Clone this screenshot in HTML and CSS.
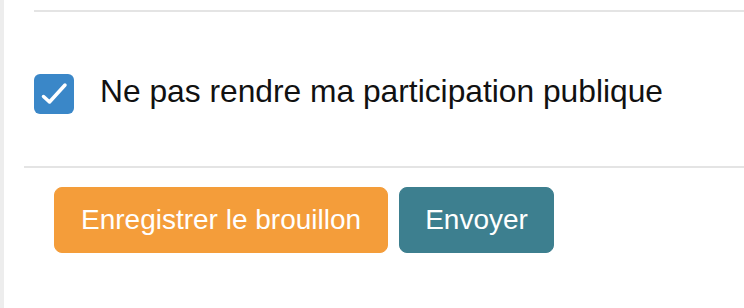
FILE: index.html
```html
<!DOCTYPE html>
<html lang="fr">
<head>
<meta charset="utf-8">
<title>Participation</title>
<link rel="stylesheet" href="styles.css">
</head>
<body>
<div class="page">
  <div class="section">
    <div class="check-row">
      <span class="checkbox">
        <svg width="40" height="40" viewBox="0 0 40 40" aria-hidden="true">
          <polyline points="9.5,22.5 15.5,28 31,11" fill="none" stroke="#ffffff" stroke-width="3.5" stroke-linecap="round" stroke-linejoin="round"/>
        </svg>
      </span>
      <label class="check-label">Ne pas rendre ma participation publique</label>
    </div>
  </div>
  <div class="footer">
    <button class="btn btn-draft" type="button">Enregistrer le brouillon</button>
    <button class="btn btn-send" type="button">Envoyer</button>
  </div>
</div>
</body>
</html>
```
FILE: styles.css
```css
html, body {
  margin: 0;
  padding: 0;
  background: #ffffff;
}

body {
  font-family: "Liberation Sans", Arial, Helvetica, sans-serif;
  color: #111111;
}

.page {
  box-sizing: border-box;
  height: 308px;
  border-left: 4px solid #ededed;
  padding-top: 10px;
  overflow: hidden;
}

.section {
  margin-left: 30px;
  border-top: 2px solid #e4e4e4;
  padding-top: 62px;
  padding-bottom: 52px;
}

.check-row {
  display: flex;
  align-items: flex-start;
  gap: 26px;
}

.checkbox {
  display: block;
  width: 40px;
  height: 40px;
  border-radius: 6px;
  background: #3a87c8;
  flex: none;
}

.checkbox svg {
  display: block;
}

.check-label {
  font-size: 31.75px;
  line-height: 40px;
  margin-top: -3px;
  color: #111111;
}

.footer {
  margin-left: 20px;
  border-top: 2px solid #e4e4e4;
  padding: 19px 0 0 30px;
  display: flex;
  gap: 11px;
}

.btn {
  font-family: "Liberation Sans", Arial, Helvetica, sans-serif;
  font-size: 28px;
  line-height: 40px;
  padding: 12px 24px;
  border: 1px solid transparent;
  border-radius: 8px;
  color: #ffffff;
  cursor: pointer;
  height: 66px;
  box-sizing: border-box;
}

.btn-draft {
  background: #f49d3a;
  border-color: #f49d3a;
  padding: 12px 26px;
}

.btn-send {
  background: #3d7f8f;
  border-color: #3d7f8f;
  padding: 12px 25px;
}
```
